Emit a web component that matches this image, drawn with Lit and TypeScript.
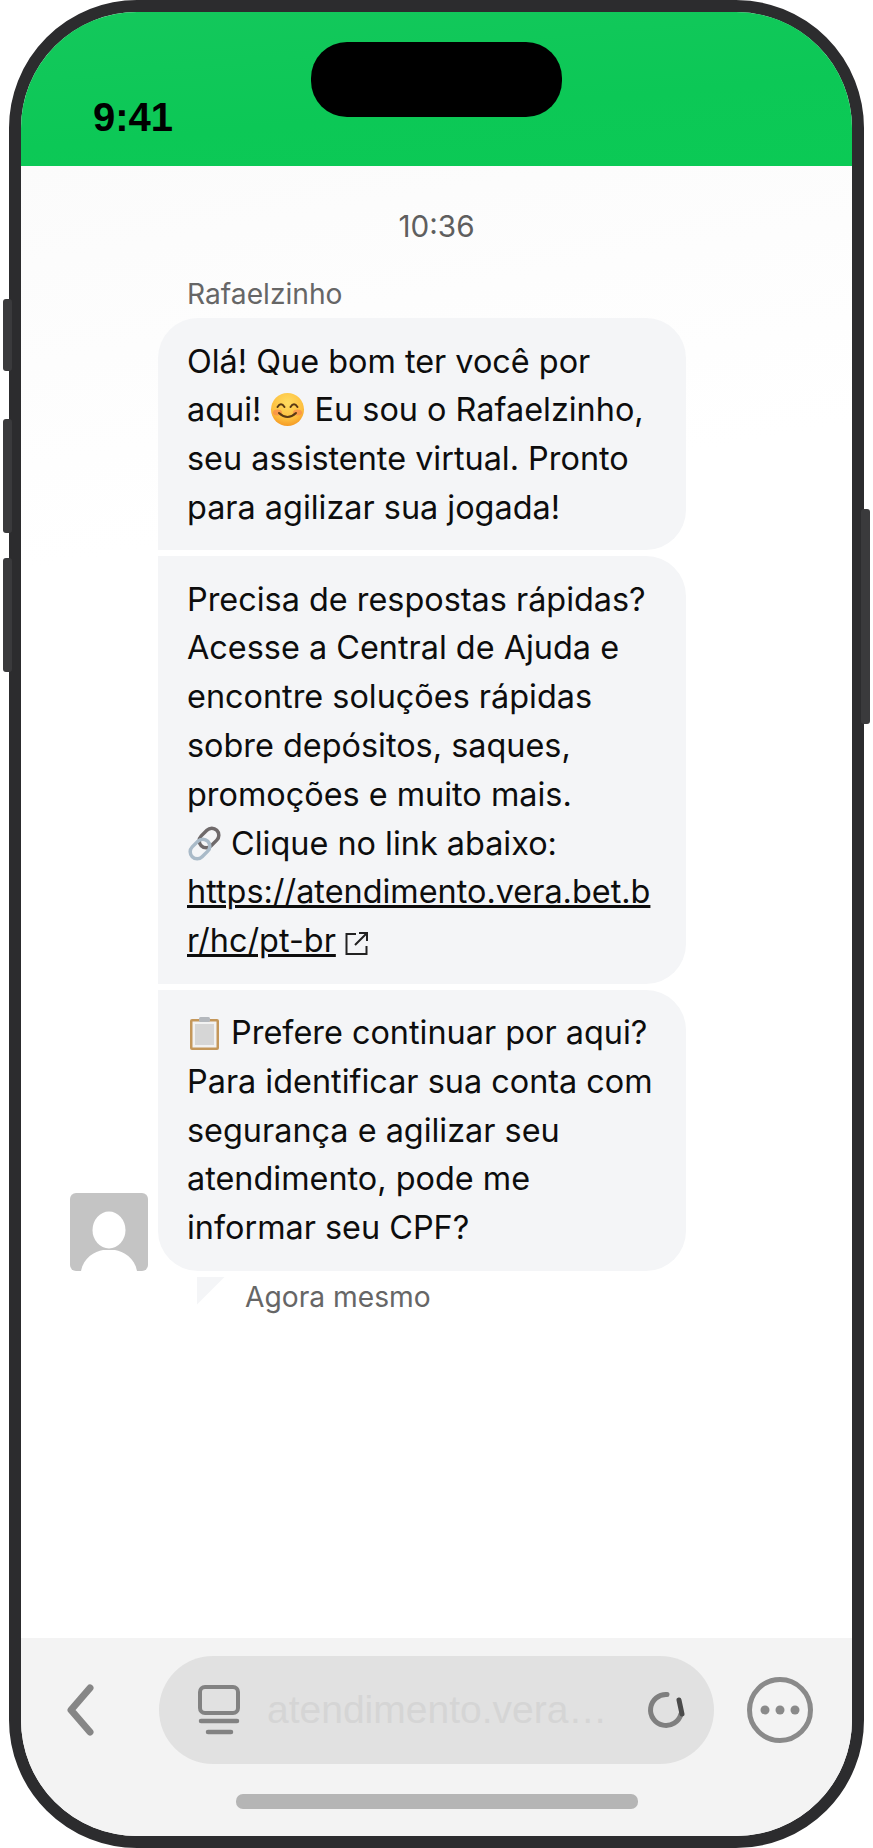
import { LitElement, html, css } from "lit";
import { customElement } from "lit/decorators.js";

const smile = html`<svg class="emo" viewBox="0 0 35 35"><defs><radialGradient id="sm" cx=".5" cy=".3" r=".75"><stop offset="0" stop-color="#ffdc60"/><stop offset=".65" stop-color="#fdbf3f"/><stop offset="1" stop-color="#f3921f"/></radialGradient></defs><circle cx="17.5" cy="17.5" r="16.5" fill="url(#sm)"/><ellipse cx="7.500" cy="20.500" rx="4.500" ry="3" fill="#f97f4f" opacity=".6"/><ellipse cx="27.500" cy="20.500" rx="4.500" ry="3" fill="#f97f4f" opacity=".6"/><path d="M7.500 15q3.500-5.500 7 0M20.500 15q3.500-5.500 7 0" fill="none" stroke="#5a3a14" stroke-width="2" stroke-linecap="round"/><path d="M9 21q8.500 8 17 0" fill="none" stroke="#5a3a14" stroke-width="2" stroke-linecap="round"/></svg>`;
const link = html`<svg class="emo" viewBox="0 0 35 35"><g fill="none"><rect x="11" y="5" width="22" height="14" rx="7" transform="rotate(-45 22 12)" stroke="#6f6a6b" stroke-width="3.500"/><rect x="2" y="16" width="22" height="14" rx="7" transform="rotate(-45 13 23)" stroke="#a9bac8" stroke-width="3.500"/></g></svg>`;
const clip = html`<svg class="emo" viewBox="0 0 35 35"><rect x="3" y="4" width="29" height="31" rx="2" fill="#c4975a"/><rect x="5.500" y="6.500" width="24" height="26" fill="#f2f2f2"/><rect x="8" y="9" width="19" height="21" fill="#d6d6d6"/><rect x="12" y="2" width="11" height="5" rx="1.500" fill="#b4b8bd"/></svg>`;

@customElement("app-root")
export class AppRoot extends LitElement {
  static styles = css`
    :host { display: block; width: 873px; height: 1848px; background: #fff; font-family: Inter, "Liberation Sans", sans-serif; overflow: hidden; }
    .device { position: relative; width: 873px; height: 1848px; }
    .btn { position: absolute; z-index: 1; background: #3a3a3c; width: 9px; border-radius: 3px; }
    .b1 { left: 3px; top: 299px; height: 72px; }
    .b2 { left: 3px; top: 419px; height: 114px; }
    .b3 { left: 3px; top: 558px; height: 114px; }
    .b4 { left: 861px; top: 509px; height: 215px; }
    .frame { position: absolute; left: 9px; top: 0; width: 855px; height: 1848px; box-sizing: border-box; border: 12px solid #2c2c2e; border-radius: 128px; background: #fff; overflow: hidden; display: flex; flex-direction: column; }
    .status { flex: none; height: 154px; background: linear-gradient(175deg, #14c85c, #0cc856 60%, #0bca55); position: relative; }
    .island { position: absolute; left: 290px; top: 30px; width: 251px; height: 75px; border-radius: 36px; background: #000; }
    .clock { position: absolute; left: 72px; top: 80px; font: 700 40px/50px "Liberation Sans", sans-serif; color: #000; }
    .chat { flex: 1; min-height: 0; display: flex; flex-direction: column; background: linear-gradient(170deg, #fbfbfb, #fff 25%); }
    .time { margin-top: 42px; text-align: center; font-size: 29.7px; line-height: 36px; color: #5f5f5f; }
    .name { margin: 33px 0 0 166px; font-size: 28.2px; line-height: 34px; color: #666; }
    .row { display: flex; align-items: flex-end; margin: 7px 0 0 49px; gap: 10px; }
    .avatar { width: 78px; height: 78px; flex: none; }
    .bubbles { width: 528px; display: flex; flex-direction: column; gap: 6px; }
    .bubble { background: #f4f5f7; padding: 19.5px 29px 17.5px 29px; border-radius: 0 40px 40px 0; font-size: 32.4px; line-height: 48.8px; color: #0d0d0d; overflow-wrap: anywhere; }
    .bubble.first { border-top-left-radius: 40px; }
    .bubble.last { border-bottom-left-radius: 40px; }
    .bubble a { color: #0d0d0d; text-decoration: underline; }
    .emo { width: 35px; height: 35px; vertical-align: -6px; }
    .ext { width: 24px; height: 24px; vertical-align: -3px; margin-left: 9px; }
    .foot { display: flex; margin: 6px 0 0 176px; }
    .tail { width: 28px; height: 28px; background: #f4f5f7; clip-path: polygon(0 0, 100% 0, 0 100%); }
    .ago { margin: 3px 0 0 20px; font-size: 28.2px; line-height: 34px; color: #666; }
    .toolbar { flex: none; height: 198px; background: #f3f3f3; position: relative; box-sizing: border-box; padding: 18px 0 0 44px; }
    .tools { display: flex; align-items: center; height: 108px; }
    .back { width: 30px; height: 54px; flex: none; }
    .url { margin-left: 64px; width: 555px; height: 108px; flex: none; border-radius: 54px; background: #e1e1e1; display: flex; align-items: center; box-sizing: border-box; padding-left: 39px; }
    .url .mon { width: 42px; height: 50px; flex: none; }
    .url span { margin-left: 27px; width: 343px; flex: none; font: 39px/48px "Liberation Sans", sans-serif; color: #d5d5d5; white-space: nowrap; }
    .url .spin { margin-left: 36px; width: 40px; height: 40px; flex: none; }
    .more { margin-left: 33px; width: 66px; height: 66px; flex: none; }
    .home { position: absolute; left: 215px; top: 156px; width: 402px; height: 15px; border-radius: 7px; background: #b5b5b5; }
  `;
  render() {
    return html`<div class="device">
      <div class="btn b1"></div><div class="btn b2"></div><div class="btn b3"></div><div class="btn b4"></div>
      <div class="frame">
        <div class="status"><div class="clock">9:41</div><div class="island"></div></div>
        <div class="chat">
          <div class="time">10:36</div>
          <div class="name">Rafaelzinho</div>
          <div class="row">
            <svg class="avatar" viewBox="0 0 78 78"><rect width="78" height="78" rx="6" fill="#c4c4c4"/><ellipse cx="39" cy="37" rx="16.500" ry="18.500" fill="#fff"/><path d="M11 78c2-13 14-20 22-21h12c8 1 20 8 22 21Z" fill="#fff"/></svg>
            <div class="bubbles">
              <div class="bubble first">Olá! Que bom ter você por aqui! ${smile} Eu sou o Rafaelzinho, seu assistente virtual. Pronto para agilizar sua jogada!</div>
              <div class="bubble">Precisa de respostas rápidas? Acesse a Central de Ajuda e encontre soluções rápidas sobre depósitos, saques, promoções e muito mais.<br>${link} Clique no link abaixo:<br><a href="#">https://atendimento.vera.bet.br/hc/pt-br</a><svg class="ext" viewBox="0 0 24 24" fill="none" stroke="#222" stroke-width="2"><path d="M11 3H1.500v20h20v-8M14 2h8v8M22 2 10 14"/></svg></div>
              <div class="bubble last">${clip} Prefere continuar por aqui? Para identificar sua conta com segurança e agilizar seu atendimento, pode me informar seu CPF?</div>
            </div>
          </div>
          <div class="foot"><div class="tail"></div><div class="ago">Agora mesmo</div></div>
        </div>
        <div class="toolbar">
          <div class="tools">
            <svg class="back" viewBox="0 0 30 54" fill="none" stroke="#868686" stroke-width="7" stroke-linecap="round" stroke-linejoin="round"><path d="M25 5 6 27l19 22"/></svg>
            <div class="url">
              <svg class="mon" viewBox="0 0 42 50" fill="none" stroke="#828282" stroke-linecap="round"><rect x="2" y="2" width="38" height="26" rx="5" stroke-width="4"/><path d="M3 36h36" stroke-width="4.500"/><path d="M10 47h23" stroke-width="4.500"/></svg>
              <span>atendimento.vera…</span>
              <svg class="spin" viewBox="0 0 40 40" fill="none" stroke-linecap="round"><path d="M21 4.500A15.500 15.500 0 1 0 35 24" stroke="#7f7f7f" stroke-width="5"/><path d="M33 10l3 14" stroke="#4a4a4a" stroke-width="5"/></svg>
            </div>
            <svg class="more" viewBox="0 0 66 66"><circle cx="33" cy="33" r="30.500" fill="none" stroke="#8a8a8a" stroke-width="5"/><circle cx="18" cy="33" r="4.500" fill="#8a8a8a"/><circle cx="33" cy="33" r="4.500" fill="#8a8a8a"/><circle cx="48" cy="33" r="4.500" fill="#8a8a8a"/></svg>
          </div>
          <div class="home"></div>
        </div>
      </div>
    </div>`;
  }
}
